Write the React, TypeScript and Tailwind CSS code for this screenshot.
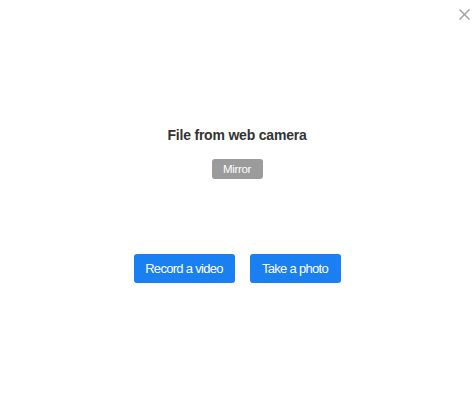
export default function App() {
  return (
    <div
      className="relative w-[474px] h-[410px] bg-white flex flex-col items-center"
      style={{ fontFamily: '"Liberation Sans", Arial, sans-serif' }}
    >
      <button className="absolute top-[9px] right-[4px] text-[#a3a3a3]">
        <svg width="11" height="11" viewBox="0 0 11 11" fill="none" stroke="currentColor" strokeWidth="1.5">
          <path d="M0.5 0.5L10.5 10.5M10.5 0.5L0.5 10.5" />
        </svg>
      </button>

      <h2 className="mt-[127px] text-[14px] leading-[17px] font-bold text-[#333] tracking-[-0.2px]">
        File from web camera
      </h2>
      <button className="mt-[15px] h-[20px] w-[51px] rounded-[3px] bg-[#9b9b9b] text-white text-[11.5px] leading-[20px] tracking-[-0.3px]">
        Mirror
      </button>

      <div className="mt-[75px] flex gap-[15px]">
        <button className="h-[29px] w-[101px] rounded-[3px] bg-[#1a7ff1] text-white text-[13px] tracking-[-0.7px]">
          Record a video
        </button>
        <button className="h-[29px] w-[91px] rounded-[3px] bg-[#1a7ff1] text-white text-[13px] tracking-[-0.7px]">
          Take a photo
        </button>
      </div>
    </div>
  );
}
